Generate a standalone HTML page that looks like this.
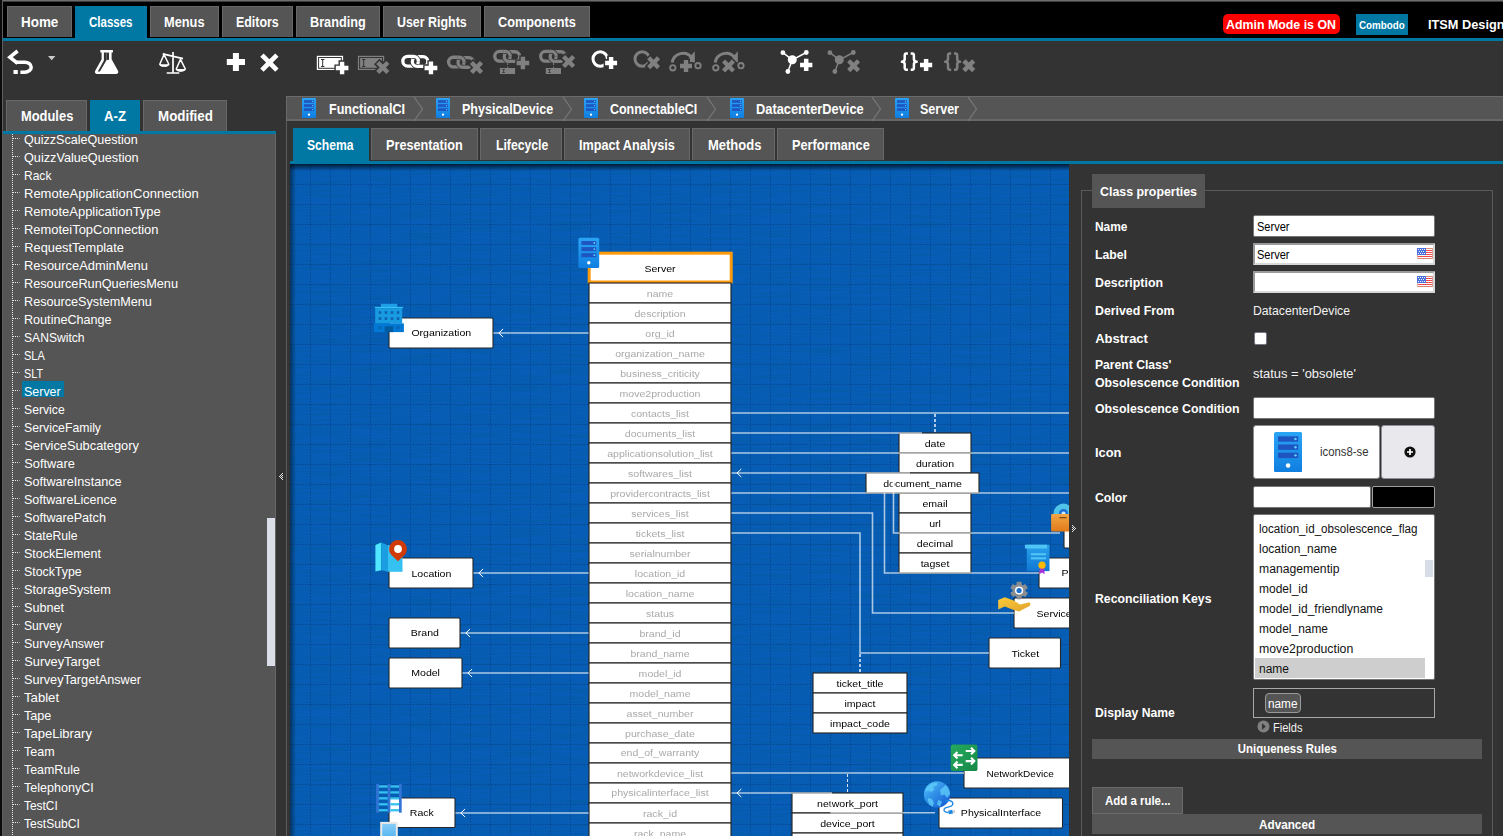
<!DOCTYPE html>
<html><head><meta charset="utf-8"><title>ITSM Designer</title>
<style>
*{box-sizing:border-box;margin:0;padding:0}
html,body{width:1503px;height:836px;overflow:hidden;background:#333;font-family:"Liberation Sans",sans-serif;color:#fff}
.a{position:absolute}
.t{position:absolute;white-space:nowrap;display:block}
svg{position:absolute;overflow:hidden}
svg text{font-family:"Liberation Sans",sans-serif}
</style></head><body>
<div class="a" style="left:0px;top:0px;width:1503px;height:836px;background:#333;"></div>
<div class="a" style="left:3px;top:2px;width:1500px;height:36px;background:#000;"></div>
<div class="a" style="left:0px;top:0px;width:1503px;height:1px;background:#6e6e6e;"></div>
<div class="a" style="left:0px;top:1px;width:1503px;height:1px;background:#3c3c3c;"></div>
<div class="a" style="left:0px;top:0px;width:2px;height:836px;background:#0c0c0c;"></div>
<div class="a" style="left:2px;top:0px;width:1px;height:836px;background:#5e5e5e;"></div>
<div class="a" style="left:3px;top:37.7px;width:1500px;height:3.3px;background:#0078a3;"></div>
<div class="a" style="left:7px;top:6px;width:65px;height:31px;background:#555;border:1px solid #686868;border-bottom:0;"></div>
<span class="t" style="left:21.00px;top:13.20px;font-size:14px;line-height:18px;font-weight:700;color:#fff;transform:scaleX(0.9587);transform-origin:0 50%;">Home</span>
<div class="a" style="left:75px;top:6px;width:72px;height:32px;background:#0078a3;border:1px solid #0078a3;"></div>
<span class="t" style="left:89.20px;top:13.20px;font-size:14px;line-height:18px;font-weight:700;color:#fff;transform:scaleX(0.8217);transform-origin:0 50%;">Classes</span>
<div class="a" style="left:150px;top:6px;width:69px;height:31px;background:#555;border:1px solid #686868;border-bottom:0;"></div>
<span class="t" style="left:164.10px;top:13.20px;font-size:14px;line-height:18px;font-weight:700;color:#fff;transform:scaleX(0.9133);transform-origin:0 50%;">Menus</span>
<div class="a" style="left:222px;top:6px;width:71px;height:31px;background:#555;border:1px solid #686868;border-bottom:0;"></div>
<span class="t" style="left:236.10px;top:13.20px;font-size:14px;line-height:18px;font-weight:700;color:#fff;transform:scaleX(0.8853);transform-origin:0 50%;">Editors</span>
<div class="a" style="left:296px;top:6px;width:84px;height:31px;background:#555;border:1px solid #686868;border-bottom:0;"></div>
<span class="t" style="left:310.20px;top:13.20px;font-size:14px;line-height:18px;font-weight:700;color:#fff;transform:scaleX(0.9064);transform-origin:0 50%;">Branding</span>
<div class="a" style="left:383px;top:6px;width:98px;height:31px;background:#555;border:1px solid #686868;border-bottom:0;"></div>
<span class="t" style="left:397.30px;top:13.20px;font-size:14px;line-height:18px;font-weight:700;color:#fff;transform:scaleX(0.8870);transform-origin:0 50%;">User Rights</span>
<div class="a" style="left:484px;top:6px;width:106px;height:31px;background:#555;border:1px solid #686868;border-bottom:0;"></div>
<span class="t" style="left:498.30px;top:13.20px;font-size:14px;line-height:18px;font-weight:700;color:#fff;transform:scaleX(0.9093);transform-origin:0 50%;">Components</span>
<div class="a" style="left:1223px;top:14px;width:117px;height:20px;background:#f00;border-radius:5px;"></div>
<span class="t" style="left:1226.40px;top:16.00px;font-size:13px;line-height:17px;font-weight:700;color:#fff;transform:scaleX(0.9519);transform-origin:0 50%;">Admin Mode is ON</span>
<div class="a" style="left:1356px;top:14px;width:52px;height:21px;background:#0078a3;"></div>
<span class="t" style="left:1359.30px;top:17.80px;font-size:11px;line-height:15px;font-weight:700;color:#fff;transform:scaleX(0.8904);transform-origin:0 50%;">Combodo</span>
<span class="t" style="left:1428.00px;top:16.10px;font-size:13px;line-height:17px;font-weight:700;color:#fff;transform:scaleX(0.9812);transform-origin:0 50%;">ITSM Designer</span>
<svg class="a" style="left:0;top:41px" width="1503" height="50" viewBox="0 41 1503 50"><path fill="none" stroke="#fff" stroke-width="3.5" d="M15 62.2H24.8a6.400 5 0 0 1 0 10H20.4"/><path fill="none" stroke="#fff" stroke-width="3.6" stroke-linejoin="miter" d="M17.6 51L9.9 57.2L17.6 63.400"/><rect x="13.5" y="70" width="4.300" height="4" fill="#fff"/><path fill="#ccc" d="M48 56h7.4l-3.7 4.3z"/><path fill="#fff" d="M100.3 50h12.6v2.6h-1.3v6.6l6.4 11.6c.9 1.7-.2 3.2-2 3.2H97.2c-1.800 0-2.9-1.500-2-3.200l6.400-11.600v-6.600h-1.300z"/><path fill="#333" d="M103.900 52.600h2.7v7.300l-6.700 11.700h-2.100l6.100-11.100z"/><path fill="#333" d="M106.6 59.9h2.400v-7.300h-2.400z"/><g fill="none" stroke="#fff" stroke-width="1.7"><path d="M173 52v20.500M162.700 53.800L183 58.600M166.700 73h12.600" /><path d="M164 54.500l-4.200 9.700a4.600 2.400 0 0 0 9 0z M180.500 59.300l-4.200 9.700a4.600 2.400 0 0 0 9 0z" stroke-width="1.5"/></g><path fill="#fff" d="M159.500 64.200h9.300a4.700 2.800 0 0 1-9.300 0zM176 69h9.300a4.700 2.800 0 0 1-9.300 0z"/><path fill="#fff" d="M232.9 52.9h6v6.1h6.1v6h-6.1v6.1h-6v-6.1h-6.1v-6h6.1z"/><g transform="rotate(45 269.4 62.6)"><path fill="#fff" d="M267.05 52.0095h4.7v8.2405h8.2405v4.7h-8.2405v8.2405h-4.7v-8.2405h-8.2405v-4.7h8.2405z"/></g><rect x="316.800" y="55.800" width="26.300" height="14.200" fill="#fff"/><rect x="318.600" y="57.500" width="22.700" height="10.800" fill="none" stroke="#333" stroke-width="1"/><path stroke="#333" stroke-width="1" fill="none" d="M321 59.500h3.400M321 66.500h3.400M322.700 59.500v7"/><path fill="#333" d="M338.5 60.3h7.2v4.1h4.1v7.2h-4.1v4.1h-7.2v-4.1h-4.1v-7.2h4.1z"/><path fill="#fff" d="M339.9 61.7h4.4v4.1h4.1v4.4h-4.1v4.1h-4.4v-4.1h-4.1v-4.4h4.1z"/><rect x="357.900" y="55.800" width="26.300" height="14.200" fill="#808080"/><rect x="359.600" y="57.500" width="22.900" height="10.800" fill="none" stroke="#333" stroke-width="1"/><path stroke="#333" stroke-width="1" fill="none" d="M362 59.500h3.400M362 66.500h3.400M363.700 59.500v7"/><g transform="rotate(45 382.8 67.5)"><path fill="#333" d="M378.9 58.945h7.8v4.655h4.655v7.8h-4.655v4.655h-7.8v-4.655h-4.655v-7.8h4.655z"/></g><g transform="rotate(45 382.8 67.5)"><path fill="#808080" d="M380.6 60.42h4.4v4.88h4.88v4.4h-4.88v4.88h-4.4v-4.88h-4.88v-4.4h4.88z"/></g><defs><clipPath id="ca1"><rect x="409.7" y="61.35" width="9" height="13.3"/></clipPath><clipPath id="cb1"><rect x="412" y="52.7" width="9" height="8.65"/></clipPath></defs><g fill="none"><rect x="402.85" y="56.35" width="15.5" height="9.7" rx="4.85" stroke="#fff" stroke-width="3.3"/><rect x="412.35" y="56.65" width="15.5" height="9.7" rx="4.85" stroke="#333" stroke-width="4.8" clip-path="url(#ca1)"/><rect x="412.35" y="56.65" width="15.5" height="9.7" rx="4.85" stroke="#fff" stroke-width="3.3"/><rect x="402.85" y="56.35" width="15.5" height="9.7" rx="4.85" stroke="#333" stroke-width="4.8" clip-path="url(#cb1)"/><rect x="402.85" y="56.35" width="15.5" height="9.7" rx="4.85" stroke="#fff" stroke-width="3.3" clip-path="url(#cb1)"/></g><path fill="#333" d="M427.35 60.25h7.2v4.1h4.1v7.2h-4.1v4.1h-7.2v-4.1h-4.1v-7.2h4.1z"/><path fill="#fff" d="M428.75 61.55h4.4v4.2h4.2v4.4h-4.2v4.2h-4.4v-4.2h-4.2v-4.4h4.2z"/><defs><clipPath id="ca2"><rect x="455.4" y="62.25" width="9" height="13.3"/></clipPath><clipPath id="cb2"><rect x="457.7" y="53.6" width="9" height="8.65"/></clipPath></defs><g fill="none"><rect x="448.55" y="57.25" width="15.5" height="9.7" rx="4.85" stroke="#808080" stroke-width="3.3"/><rect x="458.05" y="57.55" width="15.5" height="9.7" rx="4.85" stroke="#333" stroke-width="4.8" clip-path="url(#ca2)"/><rect x="458.05" y="57.55" width="15.5" height="9.7" rx="4.85" stroke="#808080" stroke-width="3.3"/><rect x="448.55" y="57.25" width="15.5" height="9.7" rx="4.85" stroke="#333" stroke-width="4.8" clip-path="url(#cb2)"/><rect x="448.55" y="57.25" width="15.5" height="9.7" rx="4.85" stroke="#808080" stroke-width="3.3" clip-path="url(#cb2)"/></g><g transform="rotate(45 476.5 67.5)"><path fill="#333" d="M472.6 58.945h7.8v4.655h4.655v7.8h-4.655v4.655h-7.8v-4.655h-4.655v-7.8h4.655z"/></g><g transform="rotate(45 476.5 67.5)"><path fill="#808080" d="M474.3 60.42h4.4v4.88h4.88v4.4h-4.88v4.88h-4.4v-4.88h-4.88v-4.4h4.88z"/></g><defs><clipPath id="ca3"><rect x="501.6" y="56.45" width="9" height="13.3"/></clipPath><clipPath id="cb3"><rect x="503.9" y="47.8" width="9" height="8.65"/></clipPath></defs><g fill="none"><rect x="494.75" y="51.45" width="15.5" height="9.7" rx="4.85" stroke="#808080" stroke-width="3.3"/><rect x="504.25" y="51.75" width="15.5" height="9.7" rx="4.85" stroke="#333" stroke-width="4.8" clip-path="url(#ca3)"/><rect x="504.25" y="51.75" width="15.5" height="9.7" rx="4.85" stroke="#808080" stroke-width="3.3"/><rect x="494.75" y="51.45" width="15.5" height="9.7" rx="4.85" stroke="#333" stroke-width="4.8" clip-path="url(#cb3)"/><rect x="494.75" y="51.45" width="15.5" height="9.7" rx="4.85" stroke="#808080" stroke-width="3.3" clip-path="url(#cb3)"/></g><path fill="#333" d="M519.3 55.3h7.2v4.1h4.1v7.2h-4.1v4.1h-7.2v-4.1h-4.1v-7.2h4.1z"/><path fill="#808080" d="M520.7 56.7h4.4v4.1h4.1v4.4h-4.1v4.1h-4.4v-4.1h-4.1v-4.4h4.1z"/><rect x="499.900" y="68" width="15.200" height="6" fill="#808080"/><path stroke="#808080" stroke-width="1" stroke-dasharray="2 1.5" d="M507.700 63v5"/><path stroke="#333" stroke-width=".8" fill="none" d="M502.300 69.500h2.600M502.300 72.500h2.600M503.600 69.500v3"/><defs><clipPath id="ca4"><rect x="547.5" y="56.45" width="9" height="13.3"/></clipPath><clipPath id="cb4"><rect x="549.8" y="47.8" width="9" height="8.65"/></clipPath></defs><g fill="none"><rect x="540.65" y="51.45" width="15.5" height="9.7" rx="4.85" stroke="#808080" stroke-width="3.3"/><rect x="550.15" y="51.75" width="15.5" height="9.7" rx="4.85" stroke="#333" stroke-width="4.8" clip-path="url(#ca4)"/><rect x="550.15" y="51.75" width="15.5" height="9.7" rx="4.85" stroke="#808080" stroke-width="3.3"/><rect x="540.65" y="51.45" width="15.5" height="9.7" rx="4.85" stroke="#333" stroke-width="4.8" clip-path="url(#cb4)"/><rect x="540.65" y="51.45" width="15.5" height="9.7" rx="4.85" stroke="#808080" stroke-width="3.3" clip-path="url(#cb4)"/></g><g transform="rotate(45 568.6 61.5)"><path fill="#333" d="M564.7 52.945h7.8v4.655h4.655v7.8h-4.655v4.655h-7.8v-4.655h-4.655v-7.8h4.655z"/></g><g transform="rotate(45 568.6 61.5)"><path fill="#808080" d="M566.4 54.42h4.4v4.88h4.88v4.4h-4.88v4.88h-4.4v-4.88h-4.88v-4.4h4.88z"/></g><rect x="545.800" y="68" width="15.200" height="6" fill="#808080"/><path stroke="#808080" stroke-width="1" stroke-dasharray="2 1.5" d="M553.600 63v5"/><path stroke="#333" stroke-width=".8" fill="none" d="M548.200 69.500h2.600M548.200 72.500h2.600M549.500 69.500v3"/><circle cx="600.200" cy="59" r="7.200" fill="none" stroke="#fff" stroke-width="3"/><path fill="#333" d="M607.1 55.5h8v3.5h3.5v8h-3.5v3.5h-8v-3.5h-3.5v-8h3.5z"/><path fill="#fff" d="M608.9 57h4.4v3.8h3.8v4.4h-3.8v3.8h-4.4v-3.8h-3.8v-4.4h3.8z"/><circle cx="642.200" cy="59" r="7.200" fill="none" stroke="#808080" stroke-width="3"/><g transform="rotate(45 653.6 62.7)"><path fill="#333" d="M649.7 54.145h7.8v4.655h4.655v7.8h-4.655v4.655h-7.8v-4.655h-4.655v-7.8h4.655z"/></g><g transform="rotate(45 653.6 62.7)"><path fill="#808080" d="M651.45 55.738h4.3v4.812h4.812v4.3h-4.812v4.812h-4.3v-4.812h-4.812v-4.3h4.812z"/></g><path fill="none" stroke="#808080" stroke-width="3" d="M672.2 62.500a11 11 0 0 1 19.500-5"/><path fill="#808080" d="M694.8 51.300v11.200h-9.800z"/><circle cx="672.8" cy="67.800" r="2.700" fill="none" stroke="#808080" stroke-width="1.800"/><circle cx="698" cy="65.700" r="2.700" fill="none" stroke="#808080" stroke-width="1.800"/><path fill="#333" d="M682 58.5h8v3.5h3.5v8h-3.5v3.5h-8v-3.5h-3.5v-8h3.5z"/><path fill="#808080" d="M683.8 60h4.4v3.8h3.8v4.4h-3.8v3.8h-4.4v-3.8h-3.8v-4.4h3.8z"/><path fill="none" stroke="#808080" stroke-width="3" d="M715.2 62.500a11 11 0 0 1 19.500-5"/><path fill="#808080" d="M737.8 51.300v11.200h-9.800z"/><circle cx="715.8" cy="67.800" r="2.700" fill="none" stroke="#808080" stroke-width="1.800"/><circle cx="741" cy="65.700" r="2.700" fill="none" stroke="#808080" stroke-width="1.800"/><g transform="rotate(45 728.5 66)"><path fill="#333" d="M724.6 57.445h7.8v4.655h4.655v7.8h-4.655v4.655h-7.8v-4.655h-4.655v-7.8h4.655z"/></g><g transform="rotate(45 728.5 66)"><path fill="#808080" d="M726.35 59.038h4.3v4.812h4.812v4.3h-4.812v4.812h-4.3v-4.812h-4.812v-4.3h4.812z"/></g><g stroke="#fff" stroke-width="1.500" fill="none"><path d="M782.9 52.700L792.3 59.800L806.3 52.500M792.3 59.800L787.9 71.500"/></g><g fill="#fff"><circle cx="782.9" cy="52.700" r="2.400"/><circle cx="806.3" cy="52.500" r="2.400"/><circle cx="792.3" cy="59.800" r="4.500"/><circle cx="787.9" cy="71.500" r="2.400"/></g><path fill="#333" d="M802.2 57.3h8v3.6h3.6v8h-3.6v3.6h-8v-3.6h-3.6v-8h3.6z"/><path fill="#fff" d="M803.95 58.75h4.5v3.9h3.9v4.5h-3.9v3.9h-4.5v-3.9h-3.9v-4.5h3.9z"/><g stroke="#808080" stroke-width="1.500" fill="none"><path d="M829.9 52.700L839.3 59.800L853.3 52.500M839.3 59.800L834.9 71.500"/></g><g fill="#808080"><circle cx="829.9" cy="52.700" r="2.400"/><circle cx="853.3" cy="52.500" r="2.400"/><circle cx="839.3" cy="59.800" r="4.500"/><circle cx="834.9" cy="71.500" r="2.400"/></g><g transform="rotate(45 853.6 65.7)"><path fill="#333" d="M849.7 57.145h7.8v4.655h4.655v7.8h-4.655v4.655h-7.8v-4.655h-4.655v-7.8h4.655z"/></g><g transform="rotate(45 853.6 65.7)"><path fill="#808080" d="M851.45 58.738h4.3v4.812h4.812v4.3h-4.812v4.812h-4.3v-4.812h-4.812v-4.3h4.812z"/></g><path fill="none" stroke="#fff" stroke-width="2.500" stroke-linejoin="round" d="M907.9 53.6H906.3Q904.7 53.6 904.7 55.8V59.1Q904.7 61.7 901.9 61.7Q904.7 61.7 904.7 64.3V67.6Q904.7 69.8 906.3 69.8H907.9M910.7 53.6H912.3Q913.9 53.6 913.9 55.8V59.1Q913.9 61.7 916.7 61.7Q913.9 61.7 913.9 64.3V67.6Q913.9 69.8 912.3 69.8H910.7"/><path fill="#fff" d="M923.85 58.9h4.5v3.85h3.85v4.5h-3.85v3.85h-4.5v-3.85h-3.85v-4.5h3.85z"/><path fill="none" stroke="#808080" stroke-width="2.500" stroke-linejoin="round" d="M951.2 53.6H949.6Q948 53.6 948 55.8V59.1Q948 61.7 945.2 61.7Q948 61.7 948 64.3V67.6Q948 69.8 949.6 69.8H951.2M954 53.6H955.6Q957.2 53.6 957.2 55.8V59.1Q957.2 61.7 960 61.7Q957.2 61.7 957.2 64.3V67.6Q957.2 69.8 955.6 69.8H954"/><g transform="rotate(45 968.8 65.7)"><path fill="#808080" d="M966.5 58.856h4.6v4.544h4.544v4.6h-4.544v4.544h-4.6v-4.544h-4.544v-4.6h4.544z"/></g></svg>
<div class="a" style="left:286px;top:96px;width:1217px;height:25.1px;background:#555;border:1px solid #6a6a6a;border-bottom:2px solid #676767;border-right:0"></div>
<svg class="a" style="left:301.8px;top:98px" width="14" height="20" viewBox="0 0 21 30"><defs><linearGradient id="sgb0" x1="0" y1="0" x2="0" y2="1"><stop offset="0" stop-color="#2aa4f4"/><stop offset="1" stop-color="#0f7ee0"/></linearGradient></defs><rect width="21" height="30" rx="1.500" fill="url(#sgb0)"/><rect x="3" y="3.200" width="15" height="4" fill="#1f55c0"/><rect x="3" y="9.300" width="15" height="4" fill="#1f55c0"/><rect x="3" y="15.400" width="15" height="4" fill="#1f55c0"/><circle cx="16" cy="5.200" r=".9" fill="#5fd2ff"/><circle cx="16" cy="11.300" r=".9" fill="#5fd2ff"/><circle cx="16" cy="17.400" r=".9" fill="#5fd2ff"/><circle cx="10.500" cy="25" r="1.700" fill="#fff"/></svg>
<span class="t" style="left:328.60px;top:100.20px;font-size:14px;line-height:18px;font-weight:700;color:#fff;transform:scaleX(0.8964);transform-origin:0 50%;">FunctionalCI</span>
<svg class="a" style="left:436.4px;top:98px" width="14" height="20" viewBox="0 0 21 30"><defs><linearGradient id="sgb1" x1="0" y1="0" x2="0" y2="1"><stop offset="0" stop-color="#2aa4f4"/><stop offset="1" stop-color="#0f7ee0"/></linearGradient></defs><rect width="21" height="30" rx="1.500" fill="url(#sgb1)"/><rect x="3" y="3.200" width="15" height="4" fill="#1f55c0"/><rect x="3" y="9.300" width="15" height="4" fill="#1f55c0"/><rect x="3" y="15.400" width="15" height="4" fill="#1f55c0"/><circle cx="16" cy="5.200" r=".9" fill="#5fd2ff"/><circle cx="16" cy="11.300" r=".9" fill="#5fd2ff"/><circle cx="16" cy="17.400" r=".9" fill="#5fd2ff"/><circle cx="10.500" cy="25" r="1.700" fill="#fff"/></svg>
<span class="t" style="left:461.80px;top:100.20px;font-size:14px;line-height:18px;font-weight:700;color:#fff;transform:scaleX(0.8944);transform-origin:0 50%;">PhysicalDevice</span>
<svg class="a" style="left:584.1px;top:98px" width="14" height="20" viewBox="0 0 21 30"><defs><linearGradient id="sgb2" x1="0" y1="0" x2="0" y2="1"><stop offset="0" stop-color="#2aa4f4"/><stop offset="1" stop-color="#0f7ee0"/></linearGradient></defs><rect width="21" height="30" rx="1.500" fill="url(#sgb2)"/><rect x="3" y="3.200" width="15" height="4" fill="#1f55c0"/><rect x="3" y="9.300" width="15" height="4" fill="#1f55c0"/><rect x="3" y="15.400" width="15" height="4" fill="#1f55c0"/><circle cx="16" cy="5.200" r=".9" fill="#5fd2ff"/><circle cx="16" cy="11.300" r=".9" fill="#5fd2ff"/><circle cx="16" cy="17.400" r=".9" fill="#5fd2ff"/><circle cx="10.500" cy="25" r="1.700" fill="#fff"/></svg>
<span class="t" style="left:610.40px;top:100.20px;font-size:14px;line-height:18px;font-weight:700;color:#fff;transform:scaleX(0.8907);transform-origin:0 50%;">ConnectableCI</span>
<svg class="a" style="left:730.2px;top:98px" width="14" height="20" viewBox="0 0 21 30"><defs><linearGradient id="sgb3" x1="0" y1="0" x2="0" y2="1"><stop offset="0" stop-color="#2aa4f4"/><stop offset="1" stop-color="#0f7ee0"/></linearGradient></defs><rect width="21" height="30" rx="1.500" fill="url(#sgb3)"/><rect x="3" y="3.200" width="15" height="4" fill="#1f55c0"/><rect x="3" y="9.300" width="15" height="4" fill="#1f55c0"/><rect x="3" y="15.400" width="15" height="4" fill="#1f55c0"/><circle cx="16" cy="5.200" r=".9" fill="#5fd2ff"/><circle cx="16" cy="11.300" r=".9" fill="#5fd2ff"/><circle cx="16" cy="17.400" r=".9" fill="#5fd2ff"/><circle cx="10.500" cy="25" r="1.700" fill="#fff"/></svg>
<span class="t" style="left:755.50px;top:100.20px;font-size:14px;line-height:18px;font-weight:700;color:#fff;transform:scaleX(0.9165);transform-origin:0 50%;">DatacenterDevice</span>
<svg class="a" style="left:895.2px;top:98px" width="14" height="20" viewBox="0 0 21 30"><defs><linearGradient id="sgb4" x1="0" y1="0" x2="0" y2="1"><stop offset="0" stop-color="#2aa4f4"/><stop offset="1" stop-color="#0f7ee0"/></linearGradient></defs><rect width="21" height="30" rx="1.500" fill="url(#sgb4)"/><rect x="3" y="3.200" width="15" height="4" fill="#1f55c0"/><rect x="3" y="9.300" width="15" height="4" fill="#1f55c0"/><rect x="3" y="15.400" width="15" height="4" fill="#1f55c0"/><circle cx="16" cy="5.200" r=".9" fill="#5fd2ff"/><circle cx="16" cy="11.300" r=".9" fill="#5fd2ff"/><circle cx="16" cy="17.400" r=".9" fill="#5fd2ff"/><circle cx="10.500" cy="25" r="1.700" fill="#fff"/></svg>
<span class="t" style="left:920.00px;top:100.20px;font-size:14px;line-height:18px;font-weight:700;color:#fff;transform:scaleX(0.8946);transform-origin:0 50%;">Server</span>
<svg class="a" style="left:286px;top:97px" width="700" height="24" viewBox="286 97 700 24"><g fill="none" stroke="#787878" stroke-width="1.200"><path d="M414 97l8.500 12l-8.500 12"/><path d="M563 97l8.500 12l-8.500 12"/><path d="M707 97l8.500 12l-8.500 12"/><path d="M872 97l8.500 12l-8.500 12"/><path d="M968 97l8.500 12l-8.500 12"/></g></svg>
<div class="a" style="left:286px;top:121px;width:1px;height:715px;background:#5c5c5c;"></div>
<div class="a" style="left:293px;top:128px;width:76px;height:33.5px;background:#0078a3;border:1px solid #0078a3;"></div>
<span class="t" style="left:306.90px;top:136.30px;font-size:14px;line-height:18px;font-weight:700;color:#fff;transform:scaleX(0.8659);transform-origin:0 50%;">Schema</span>
<div class="a" style="left:371px;top:128px;width:107px;height:32px;background:#555;border:1px solid #686868;border-bottom:0;"></div>
<span class="t" style="left:386.40px;top:136.30px;font-size:14px;line-height:18px;font-weight:700;color:#fff;transform:scaleX(0.9055);transform-origin:0 50%;">Presentation</span>
<div class="a" style="left:480px;top:128px;width:82px;height:32px;background:#555;border:1px solid #686868;border-bottom:0;"></div>
<span class="t" style="left:495.50px;top:136.30px;font-size:14px;line-height:18px;font-weight:700;color:#fff;transform:scaleX(0.8726);transform-origin:0 50%;">Lifecycle</span>
<div class="a" style="left:564px;top:128px;width:126.3px;height:32px;background:#555;border:1px solid #686868;border-bottom:0;"></div>
<span class="t" style="left:579.30px;top:136.30px;font-size:14px;line-height:18px;font-weight:700;color:#fff;transform:scaleX(0.9033);transform-origin:0 50%;">Impact Analysis</span>
<div class="a" style="left:692px;top:128px;width:83.4px;height:32px;background:#555;border:1px solid #686868;border-bottom:0;"></div>
<span class="t" style="left:707.60px;top:136.30px;font-size:14px;line-height:18px;font-weight:700;color:#fff;transform:scaleX(0.9277);transform-origin:0 50%;">Methods</span>
<div class="a" style="left:777px;top:128px;width:107px;height:32px;background:#555;border:1px solid #686868;border-bottom:0;"></div>
<span class="t" style="left:792.20px;top:136.30px;font-size:14px;line-height:18px;font-weight:700;color:#fff;transform:scaleX(0.9078);transform-origin:0 50%;">Performance</span>
<div class="a" style="left:290px;top:160.7px;width:1213px;height:3.4px;background:#0078a3;"></div>
<div class="a" style="left:6px;top:100px;width:81px;height:31px;background:#555;border:1px solid #686868;border-bottom:0;"></div>
<span class="t" style="left:20.60px;top:107.30px;font-size:14px;line-height:18px;font-weight:700;color:#fff;transform:scaleX(0.9211);transform-origin:0 50%;">Modules</span>
<div class="a" style="left:90px;top:100px;width:50px;height:31.5px;background:#0078a3;border:1px solid #0078a3;"></div>
<span class="t" style="left:104.20px;top:107.30px;font-size:14px;line-height:18px;font-weight:700;color:#fff;transform:scaleX(0.9431);transform-origin:0 50%;">A-Z</span>
<div class="a" style="left:143px;top:100px;width:84px;height:31px;background:#555;border:1px solid #686868;border-bottom:0;"></div>
<span class="t" style="left:157.70px;top:107.30px;font-size:14px;line-height:18px;font-weight:700;color:#fff;transform:scaleX(0.9540);transform-origin:0 50%;">Modified</span>
<div class="a" style="left:3px;top:131px;width:273px;height:3px;background:#0078a3;"></div>
<div class="a" style="left:3px;top:134px;width:273px;height:702px;background:#555;border-right:1px solid #666"></div>
<svg class="a" style="left:3px;top:134px" width="30" height="702" viewBox="3 134 30 702"><g stroke="#e8e8e8" stroke-width="1" stroke-dasharray="1 1" fill="none"><path d="M12.5 134V836"/><path d="M13 138.5H19.500"/><path d="M13 156.5H19.500"/><path d="M13 174.5H19.500"/><path d="M13 192.5H19.500"/><path d="M13 210.5H19.500"/><path d="M13 228.5H19.500"/><path d="M13 246.5H19.500"/><path d="M13 264.5H19.500"/><path d="M13 282.5H19.500"/><path d="M13 300.5H19.500"/><path d="M13 318.5H19.500"/><path d="M13 336.5H19.500"/><path d="M13 354.5H19.500"/><path d="M13 372.5H19.500"/><path d="M13 390.5H19.500"/><path d="M13 408.5H19.500"/><path d="M13 426.5H19.500"/><path d="M13 444.5H19.500"/><path d="M13 462.5H19.500"/><path d="M13 480.5H19.500"/><path d="M13 498.5H19.500"/><path d="M13 516.5H19.500"/><path d="M13 534.5H19.500"/><path d="M13 552.5H19.500"/><path d="M13 570.5H19.500"/><path d="M13 588.5H19.500"/><path d="M13 606.5H19.500"/><path d="M13 624.5H19.500"/><path d="M13 642.5H19.500"/><path d="M13 660.5H19.500"/><path d="M13 678.5H19.500"/><path d="M13 696.5H19.500"/><path d="M13 714.5H19.500"/><path d="M13 732.5H19.500"/><path d="M13 750.5H19.500"/><path d="M13 768.5H19.500"/><path d="M13 786.5H19.500"/><path d="M13 804.5H19.500"/><path d="M13 822.5H19.500"/></g></svg>
<div class="a" style="left:22px;top:381px;width:42px;height:16px;background:#0078a3;"></div>
<span class="t" style="left:24.30px;top:131.80px;font-size:12.8px;line-height:16.8px;font-weight:400;color:#fff;transform:scaleX(0.9806);transform-origin:0 50%;">QuizzScaleQuestion</span>
<span class="t" style="left:24.30px;top:149.80px;font-size:12.8px;line-height:16.8px;font-weight:400;color:#fff;transform:scaleX(0.9903);transform-origin:0 50%;">QuizzValueQuestion</span>
<span class="t" style="left:24.30px;top:167.80px;font-size:12.8px;line-height:16.8px;font-weight:400;color:#fff;transform:scaleX(0.9398);transform-origin:0 50%;">Rack</span>
<span class="t" style="left:24.30px;top:185.80px;font-size:12.8px;line-height:16.8px;font-weight:400;color:#fff;transform:scaleX(1.0154);transform-origin:0 50%;">RemoteApplicationConnection</span>
<span class="t" style="left:24.30px;top:203.80px;font-size:12.8px;line-height:16.8px;font-weight:400;color:#fff;transform:scaleX(1.0114);transform-origin:0 50%;">RemoteApplicationType</span>
<span class="t" style="left:24.30px;top:221.80px;font-size:12.8px;line-height:16.8px;font-weight:400;color:#fff;transform:scaleX(1.0110);transform-origin:0 50%;">RemoteiTopConnection</span>
<span class="t" style="left:24.30px;top:239.80px;font-size:12.8px;line-height:16.8px;font-weight:400;color:#fff;">RequestTemplate</span>
<span class="t" style="left:24.30px;top:257.80px;font-size:12.8px;line-height:16.8px;font-weight:400;color:#fff;transform:scaleX(1.0068);transform-origin:0 50%;">ResourceAdminMenu</span>
<span class="t" style="left:24.30px;top:275.80px;font-size:12.8px;line-height:16.8px;font-weight:400;color:#fff;transform:scaleX(0.9931);transform-origin:0 50%;">ResourceRunQueriesMenu</span>
<span class="t" style="left:24.30px;top:293.80px;font-size:12.8px;line-height:16.8px;font-weight:400;color:#fff;transform:scaleX(0.9880);transform-origin:0 50%;">ResourceSystemMenu</span>
<span class="t" style="left:24.30px;top:311.80px;font-size:12.8px;line-height:16.8px;font-weight:400;color:#fff;transform:scaleX(0.9850);transform-origin:0 50%;">RoutineChange</span>
<span class="t" style="left:24.30px;top:329.80px;font-size:12.8px;line-height:16.8px;font-weight:400;color:#fff;transform:scaleX(0.9466);transform-origin:0 50%;">SANSwitch</span>
<span class="t" style="left:24.30px;top:347.80px;font-size:12.8px;line-height:16.8px;font-weight:400;color:#fff;transform:scaleX(0.8594);transform-origin:0 50%;">SLA</span>
<span class="t" style="left:24.30px;top:365.80px;font-size:12.8px;line-height:16.8px;font-weight:400;color:#fff;transform:scaleX(0.8433);transform-origin:0 50%;">SLT</span>
<span class="t" style="left:24.30px;top:383.80px;font-size:12.8px;line-height:16.8px;font-weight:400;color:#fff;transform:scaleX(0.9734);transform-origin:0 50%;">Server</span>
<span class="t" style="left:24.30px;top:401.80px;font-size:12.8px;line-height:16.8px;font-weight:400;color:#fff;transform:scaleX(0.9538);transform-origin:0 50%;">Service</span>
<span class="t" style="left:24.30px;top:419.80px;font-size:12.8px;line-height:16.8px;font-weight:400;color:#fff;transform:scaleX(0.9582);transform-origin:0 50%;">ServiceFamily</span>
<span class="t" style="left:24.30px;top:437.80px;font-size:12.8px;line-height:16.8px;font-weight:400;color:#fff;">ServiceSubcategory</span>
<span class="t" style="left:24.30px;top:455.80px;font-size:12.8px;line-height:16.8px;font-weight:400;color:#fff;">Software</span>
<span class="t" style="left:24.30px;top:473.80px;font-size:12.8px;line-height:16.8px;font-weight:400;color:#fff;transform:scaleX(0.9869);transform-origin:0 50%;">SoftwareInstance</span>
<span class="t" style="left:24.30px;top:491.80px;font-size:12.8px;line-height:16.8px;font-weight:400;color:#fff;transform:scaleX(0.9798);transform-origin:0 50%;">SoftwareLicence</span>
<span class="t" style="left:24.30px;top:509.80px;font-size:12.8px;line-height:16.8px;font-weight:400;color:#fff;transform:scaleX(0.9840);transform-origin:0 50%;">SoftwarePatch</span>
<span class="t" style="left:24.30px;top:527.80px;font-size:12.8px;line-height:16.8px;font-weight:400;color:#fff;transform:scaleX(0.9519);transform-origin:0 50%;">StateRule</span>
<span class="t" style="left:24.30px;top:545.80px;font-size:12.8px;line-height:16.8px;font-weight:400;color:#fff;transform:scaleX(0.9740);transform-origin:0 50%;">StockElement</span>
<span class="t" style="left:24.30px;top:563.80px;font-size:12.8px;line-height:16.8px;font-weight:400;color:#fff;transform:scaleX(0.9640);transform-origin:0 50%;">StockType</span>
<span class="t" style="left:24.30px;top:581.80px;font-size:12.8px;line-height:16.8px;font-weight:400;color:#fff;transform:scaleX(0.9920);transform-origin:0 50%;">StorageSystem</span>
<span class="t" style="left:24.30px;top:599.80px;font-size:12.8px;line-height:16.8px;font-weight:400;color:#fff;transform:scaleX(0.9861);transform-origin:0 50%;">Subnet</span>
<span class="t" style="left:24.30px;top:617.80px;font-size:12.8px;line-height:16.8px;font-weight:400;color:#fff;transform:scaleX(0.9491);transform-origin:0 50%;">Survey</span>
<span class="t" style="left:24.30px;top:635.80px;font-size:12.8px;line-height:16.8px;font-weight:400;color:#fff;transform:scaleX(0.9709);transform-origin:0 50%;">SurveyAnswer</span>
<span class="t" style="left:24.30px;top:653.80px;font-size:12.8px;line-height:16.8px;font-weight:400;color:#fff;">SurveyTarget</span>
<span class="t" style="left:24.30px;top:671.80px;font-size:12.8px;line-height:16.8px;font-weight:400;color:#fff;transform:scaleX(0.9909);transform-origin:0 50%;">SurveyTargetAnswer</span>
<span class="t" style="left:24.30px;top:689.80px;font-size:12.8px;line-height:16.8px;font-weight:400;color:#fff;transform:scaleX(1.0276);transform-origin:0 50%;">Tablet</span>
<span class="t" style="left:24.30px;top:707.80px;font-size:12.8px;line-height:16.8px;font-weight:400;color:#fff;transform:scaleX(0.9874);transform-origin:0 50%;">Tape</span>
<span class="t" style="left:24.30px;top:725.80px;font-size:12.8px;line-height:16.8px;font-weight:400;color:#fff;transform:scaleX(1.0153);transform-origin:0 50%;">TapeLibrary</span>
<span class="t" style="left:24.30px;top:743.80px;font-size:12.8px;line-height:16.8px;font-weight:400;color:#fff;transform:scaleX(0.9777);transform-origin:0 50%;">Team</span>
<span class="t" style="left:24.30px;top:761.80px;font-size:12.8px;line-height:16.8px;font-weight:400;color:#fff;transform:scaleX(0.9683);transform-origin:0 50%;">TeamRule</span>
<span class="t" style="left:24.30px;top:779.80px;font-size:12.8px;line-height:16.8px;font-weight:400;color:#fff;transform:scaleX(0.9797);transform-origin:0 50%;">TelephonyCI</span>
<span class="t" style="left:24.30px;top:797.80px;font-size:12.8px;line-height:16.8px;font-weight:400;color:#fff;transform:scaleX(0.9289);transform-origin:0 50%;">TestCI</span>
<span class="t" style="left:24.30px;top:815.80px;font-size:12.8px;line-height:16.8px;font-weight:400;color:#fff;transform:scaleX(0.9450);transform-origin:0 50%;">TestSubCI</span>
<div class="a" style="left:267px;top:518px;width:8px;height:148px;background:#d9dee7;"></div>
<svg class="a" style="left:279px;top:473px" width="4" height="7" viewBox="0 0 4 7" shape-rendering="crispEdges"><g fill="#e2e2e2"><rect x="0" y="3" width="1" height="1"/><rect x="1" y="2" width="1" height="1"/><rect x="1" y="4" width="1" height="1"/><rect x="2" y="1" width="1" height="1"/><rect x="2" y="3" width="1" height="1"/><rect x="2" y="5" width="1" height="1"/><rect x="3" y="0" width="1" height="1"/><rect x="3" y="2" width="1" height="1"/><rect x="3" y="4" width="1" height="1"/><rect x="3" y="6" width="1" height="1"/></g></svg>
<svg class="a" style="will-change:transform;left:290px;top:164px" width="779" height="672" viewBox="290 164 779 672"><defs><linearGradient id="shT" x1="0" y1="0" x2="0" y2="1"><stop offset="0" stop-color="#000" stop-opacity=".7"/><stop offset="1" stop-color="#000" stop-opacity="0"/></linearGradient><linearGradient id="shL" x1="0" y1="0" x2="1" y2="0"><stop offset="0" stop-color="#000" stop-opacity=".45"/><stop offset="1" stop-color="#000" stop-opacity="0"/></linearGradient><linearGradient id="shR" x1="1" y1="0" x2="0" y2="0"><stop offset="0" stop-color="#000" stop-opacity=".45"/><stop offset="1" stop-color="#000" stop-opacity="0"/></linearGradient><linearGradient id="gsrv" x1="0" y1="0" x2="0" y2="1"><stop offset="0" stop-color="#2aa4f4"/><stop offset="1" stop-color="#0f7ee0"/></linearGradient><linearGradient id="ggrn" x1="0" y1="0" x2="1" y2="1"><stop offset="0" stop-color="#25ab5e"/><stop offset="1" stop-color="#178847"/></linearGradient><linearGradient id="gglb" x1="0" y1="0" x2="1" y2="1"><stop offset="0" stop-color="#4fc0fb"/><stop offset="1" stop-color="#0f55d0"/></linearGradient><linearGradient id="gora" x1="0" y1="0" x2="0" y2="1"><stop offset="0" stop-color="#f2a544"/><stop offset="1" stop-color="#e07a1a"/></linearGradient><linearGradient id="gcer" x1="0" y1="0" x2="0" y2="1"><stop offset="0" stop-color="#2aa2ec"/><stop offset="1" stop-color="#1177d3"/></linearGradient><linearGradient id="ghnd" x1="0" y1="0" x2="1" y2="1"><stop offset="0" stop-color="#fbcb3a"/><stop offset="1" stop-color="#e0a22c"/></linearGradient><linearGradient id="genc" x1="0" y1="0" x2="0" y2="1"><stop offset="0" stop-color="#86cdf8"/><stop offset="1" stop-color="#42a9ee"/></linearGradient><filter id="tx" x="0" y="0" width="100%" height="100%"><feTurbulence type="fractalNoise" baseFrequency="0.02 0.7" numOctaves="2" seed="4"/><feColorMatrix type="matrix" values="0 0 0 0 0  0 0 0 0 0.1  0 0 0 0 0.25  0 0 0 0.7 -0.25"/></filter></defs><rect x="290" y="164" width="779" height="672" fill="#075db7"/><rect x="290" y="164" width="779" height="672" filter="url(#tx)"/><g stroke="#073f86" stroke-width="1" stroke-dasharray="1.800 1.200" fill="none" opacity=".6"><path d="M310.5 164V836"/><path d="M330.5 164V836"/><path d="M350.5 164V836"/><path d="M370.5 164V836"/><path d="M390.5 164V836"/><path d="M410.5 164V836"/><path d="M430.5 164V836"/><path d="M450.5 164V836"/><path d="M470.5 164V836"/><path d="M490.5 164V836"/><path d="M510.5 164V836"/><path d="M530.5 164V836"/><path d="M550.5 164V836"/><path d="M570.5 164V836"/><path d="M590.5 164V836"/><path d="M610.5 164V836"/><path d="M630.5 164V836"/><path d="M650.5 164V836"/><path d="M670.5 164V836"/><path d="M690.5 164V836"/><path d="M710.5 164V836"/><path d="M730.5 164V836"/><path d="M750.5 164V836"/><path d="M770.5 164V836"/><path d="M790.5 164V836"/><path d="M810.5 164V836"/><path d="M830.5 164V836"/><path d="M850.5 164V836"/><path d="M870.5 164V836"/><path d="M890.5 164V836"/><path d="M910.5 164V836"/><path d="M930.5 164V836"/><path d="M950.5 164V836"/><path d="M970.5 164V836"/><path d="M990.5 164V836"/><path d="M1010.5 164V836"/><path d="M1030.5 164V836"/><path d="M1050.5 164V836"/><path d="M290 184.5H1069"/><path d="M290 204.5H1069"/><path d="M290 224.5H1069"/><path d="M290 244.5H1069"/><path d="M290 264.5H1069"/><path d="M290 284.5H1069"/><path d="M290 304.5H1069"/><path d="M290 324.5H1069"/><path d="M290 344.5H1069"/><path d="M290 364.5H1069"/><path d="M290 384.5H1069"/><path d="M290 404.5H1069"/><path d="M290 424.5H1069"/><path d="M290 444.5H1069"/><path d="M290 464.5H1069"/><path d="M290 484.5H1069"/><path d="M290 504.5H1069"/><path d="M290 524.5H1069"/><path d="M290 544.5H1069"/><path d="M290 564.5H1069"/><path d="M290 584.5H1069"/><path d="M290 604.5H1069"/><path d="M290 624.5H1069"/><path d="M290 644.5H1069"/><path d="M290 664.5H1069"/><path d="M290 684.5H1069"/><path d="M290 704.5H1069"/><path d="M290 724.5H1069"/><path d="M290 744.5H1069"/><path d="M290 764.5H1069"/><path d="M290 784.5H1069"/><path d="M290 804.5H1069"/><path d="M290 824.5H1069"/></g><rect x="290" y="164" width="779" height="7" fill="url(#shT)"/><rect x="290" y="164" width="6" height="672" fill="url(#shL)"/><rect x="389" y="318" width="104" height="30" rx="1" fill="#fff" stroke="#262626" stroke-width="1.100"/><text transform="translate(441.3 335.6) scale(1.1 1)" font-size="9.6" fill="#000" text-anchor="middle">Organization</text><rect x="389" y="558" width="84" height="30" rx="1" fill="#fff" stroke="#262626" stroke-width="1.100"/><text transform="translate(431.4 576.8) scale(1.1 1)" font-size="9.6" fill="#000" text-anchor="middle">Location</text><rect x="389" y="618" width="71" height="30" rx="1" fill="#fff" stroke="#262626" stroke-width="1.100"/><text transform="translate(424.9 636.3) scale(1.1 1)" font-size="9.6" fill="#000" text-anchor="middle">Brand</text><rect x="389" y="658" width="73" height="30" rx="1" fill="#fff" stroke="#262626" stroke-width="1.100"/><text transform="translate(425.6 676.3) scale(1.1 1)" font-size="9.6" fill="#000" text-anchor="middle">Model</text><rect x="389" y="798" width="66" height="29.5" rx="1" fill="#fff" stroke="#262626" stroke-width="1.100"/><text transform="translate(421.8 816.3) scale(1.1 1)" font-size="9.6" fill="#000" text-anchor="middle">Rack</text><rect x="589.200" y="253.200" width="142" height="28.800" fill="#fff" stroke="#ff9a0a" stroke-width="3"/><text transform="translate(660 271.8) scale(1.1 1)" font-size="9.6" fill="#000" text-anchor="middle">Server</text><rect x="589" y="283" width="142" height="20" fill="#fff" stroke="#262626" stroke-width="1.150"/><text transform="translate(660 296.65) scale(1.1 1)" font-size="9.6" fill="#a9a9a9" text-anchor="middle">name</text><rect x="589" y="303" width="142" height="20" fill="#fff" stroke="#262626" stroke-width="1.150"/><text transform="translate(660 316.65) scale(1.1 1)" font-size="9.6" fill="#a9a9a9" text-anchor="middle">description</text><rect x="589" y="323" width="142" height="20" fill="#fff" stroke="#262626" stroke-width="1.150"/><text transform="translate(660 336.65) scale(1.1 1)" font-size="9.6" fill="#a9a9a9" text-anchor="middle">org_id</text><rect x="589" y="343" width="142" height="20" fill="#fff" stroke="#262626" stroke-width="1.150"/><text transform="translate(660 356.65) scale(1.1 1)" font-size="9.6" fill="#a9a9a9" text-anchor="middle">organization_name</text><rect x="589" y="363" width="142" height="20" fill="#fff" stroke="#262626" stroke-width="1.150"/><text transform="translate(660 376.65) scale(1.1 1)" font-size="9.6" fill="#a9a9a9" text-anchor="middle">business_criticity</text><rect x="589" y="383" width="142" height="20" fill="#fff" stroke="#262626" stroke-width="1.150"/><text transform="translate(660 396.65) scale(1.1 1)" font-size="9.6" fill="#a9a9a9" text-anchor="middle">move2production</text><rect x="589" y="403" width="142" height="20" fill="#fff" stroke="#262626" stroke-width="1.150"/><text transform="translate(660 416.65) scale(1.1 1)" font-size="9.6" fill="#a9a9a9" text-anchor="middle">contacts_list</text><rect x="589" y="423" width="142" height="20" fill="#fff" stroke="#262626" stroke-width="1.150"/><text transform="translate(660 436.65) scale(1.1 1)" font-size="9.6" fill="#a9a9a9" text-anchor="middle">documents_list</text><rect x="589" y="443" width="142" height="20" fill="#fff" stroke="#262626" stroke-width="1.150"/><text transform="translate(660 456.65) scale(1.1 1)" font-size="9.6" fill="#a9a9a9" text-anchor="middle">applicationsolution_list</text><rect x="589" y="463" width="142" height="20" fill="#fff" stroke="#262626" stroke-width="1.150"/><text transform="translate(660 476.65) scale(1.1 1)" font-size="9.6" fill="#a9a9a9" text-anchor="middle">softwares_list</text><rect x="589" y="483" width="142" height="20" fill="#fff" stroke="#262626" stroke-width="1.150"/><text transform="translate(660 496.65) scale(1.1 1)" font-size="9.6" fill="#a9a9a9" text-anchor="middle">providercontracts_list</text><rect x="589" y="503" width="142" height="20" fill="#fff" stroke="#262626" stroke-width="1.150"/><text transform="translate(660 516.65) scale(1.1 1)" font-size="9.6" fill="#a9a9a9" text-anchor="middle">services_list</text><rect x="589" y="523" width="142" height="20" fill="#fff" stroke="#262626" stroke-width="1.150"/><text transform="translate(660 536.65) scale(1.1 1)" font-size="9.6" fill="#a9a9a9" text-anchor="middle">tickets_list</text><rect x="589" y="543" width="142" height="20" fill="#fff" stroke="#262626" stroke-width="1.150"/><text transform="translate(660 556.65) scale(1.1 1)" font-size="9.6" fill="#a9a9a9" text-anchor="middle">serialnumber</text><rect x="589" y="563" width="142" height="20" fill="#fff" stroke="#262626" stroke-width="1.150"/><text transform="translate(660 576.65) scale(1.1 1)" font-size="9.6" fill="#a9a9a9" text-anchor="middle">location_id</text><rect x="589" y="583" width="142" height="20" fill="#fff" stroke="#262626" stroke-width="1.150"/><text transform="translate(660 596.65) scale(1.1 1)" font-size="9.6" fill="#a9a9a9" text-anchor="middle">location_name</text><rect x="589" y="603" width="142" height="20" fill="#fff" stroke="#262626" stroke-width="1.150"/><text transform="translate(660 616.65) scale(1.1 1)" font-size="9.6" fill="#a9a9a9" text-anchor="middle">status</text><rect x="589" y="623" width="142" height="20" fill="#fff" stroke="#262626" stroke-width="1.150"/><text transform="translate(660 636.65) scale(1.1 1)" font-size="9.6" fill="#a9a9a9" text-anchor="middle">brand_id</text><rect x="589" y="643" width="142" height="20" fill="#fff" stroke="#262626" stroke-width="1.150"/><text transform="translate(660 656.65) scale(1.1 1)" font-size="9.6" fill="#a9a9a9" text-anchor="middle">brand_name</text><rect x="589" y="663" width="142" height="20" fill="#fff" stroke="#262626" stroke-width="1.150"/><text transform="translate(660 676.65) scale(1.1 1)" font-size="9.6" fill="#a9a9a9" text-anchor="middle">model_id</text><rect x="589" y="683" width="142" height="20" fill="#fff" stroke="#262626" stroke-width="1.150"/><text transform="translate(660 696.65) scale(1.1 1)" font-size="9.6" fill="#a9a9a9" text-anchor="middle">model_name</text><rect x="589" y="703" width="142" height="20" fill="#fff" stroke="#262626" stroke-width="1.150"/><text transform="translate(660 716.65) scale(1.1 1)" font-size="9.6" fill="#a9a9a9" text-anchor="middle">asset_number</text><rect x="589" y="723" width="142" height="20" fill="#fff" stroke="#262626" stroke-width="1.150"/><text transform="translate(660 736.65) scale(1.1 1)" font-size="9.6" fill="#a9a9a9" text-anchor="middle">purchase_date</text><rect x="589" y="743" width="142" height="20" fill="#fff" stroke="#262626" stroke-width="1.150"/><text transform="translate(660 755.85) scale(1.1 1)" font-size="9.6" fill="#a9a9a9" text-anchor="middle">end_of_warranty</text><rect x="589" y="763" width="142" height="20" fill="#fff" stroke="#262626" stroke-width="1.150"/><text transform="translate(660 776.65) scale(1.1 1)" font-size="9.6" fill="#a9a9a9" text-anchor="middle">networkdevice_list</text><rect x="589" y="783" width="142" height="20" fill="#fff" stroke="#262626" stroke-width="1.150"/><text transform="translate(660 795.85) scale(1.1 1)" font-size="9.6" fill="#a9a9a9" text-anchor="middle">physicalinterface_list</text><rect x="589" y="803" width="142" height="20" fill="#fff" stroke="#262626" stroke-width="1.150"/><text transform="translate(660 816.65) scale(1.1 1)" font-size="9.6" fill="#a9a9a9" text-anchor="middle">rack_id</text><rect x="589" y="823" width="142" height="20" fill="#fff" stroke="#262626" stroke-width="1.150"/><text transform="translate(660 836.65) scale(1.1 1)" font-size="9.6" fill="#a9a9a9" text-anchor="middle">rack_name</text><rect x="899" y="433" width="72" height="20" fill="#fff" stroke="#262626" stroke-width="1.150"/><text transform="translate(935 446.65) scale(1.1 1)" font-size="9.6" fill="#000" text-anchor="middle">date</text><rect x="899" y="453" width="72" height="20" fill="#fff" stroke="#262626" stroke-width="1.150"/><text transform="translate(935 466.65) scale(1.1 1)" font-size="9.6" fill="#000" text-anchor="middle">duration</text><rect x="899" y="493" width="72" height="20" fill="#fff" stroke="#262626" stroke-width="1.150"/><text transform="translate(935 506.65) scale(1.1 1)" font-size="9.6" fill="#000" text-anchor="middle">email</text><rect x="899" y="513" width="72" height="20" fill="#fff" stroke="#262626" stroke-width="1.150"/><text transform="translate(935 526.65) scale(1.1 1)" font-size="9.6" fill="#000" text-anchor="middle">url</text><rect x="899" y="533" width="72" height="20" fill="#fff" stroke="#262626" stroke-width="1.150"/><text transform="translate(935 546.65) scale(1.1 1)" font-size="9.6" fill="#000" text-anchor="middle">decimal</text><rect x="899" y="553" width="72" height="20" fill="#fff" stroke="#262626" stroke-width="1.150"/><text transform="translate(935 566.65) scale(1.1 1)" font-size="9.6" fill="#000" text-anchor="middle">tagset</text><rect x="866" y="473" width="113" height="20" fill="#fff" stroke="#262626" stroke-width="1.150"/><text transform="translate(922.5 486.65) scale(1.1 1)" font-size="9.6" fill="#000" text-anchor="middle">document_name</text><rect x="813" y="673" width="94" height="20" fill="#fff" stroke="#262626" stroke-width="1.150"/><text transform="translate(860 686.65) scale(1.1 1)" font-size="9.6" fill="#000" text-anchor="middle">ticket_title</text><rect x="813" y="693" width="94" height="20" fill="#fff" stroke="#262626" stroke-width="1.150"/><text transform="translate(860 706.65) scale(1.1 1)" font-size="9.6" fill="#000" text-anchor="middle">impact</text><rect x="813" y="713" width="94" height="20" fill="#fff" stroke="#262626" stroke-width="1.150"/><text transform="translate(860 726.65) scale(1.1 1)" font-size="9.6" fill="#000" text-anchor="middle">impact_code</text><rect x="792" y="793" width="111" height="20" fill="#fff" stroke="#262626" stroke-width="1.150"/><text transform="translate(847.5 806.65) scale(1.1 1)" font-size="9.6" fill="#000" text-anchor="middle">network_port</text><rect x="792" y="813" width="111" height="20" fill="#fff" stroke="#262626" stroke-width="1.150"/><text transform="translate(847.5 826.65) scale(1.1 1)" font-size="9.6" fill="#000" text-anchor="middle">device_port</text><rect x="792" y="833" width="111" height="20" fill="#fff" stroke="#262626" stroke-width="1.150"/><text transform="translate(847.5 846.65) scale(1.1 1)" font-size="9.6" fill="#000" text-anchor="middle">x</text><rect x="1064" y="518" width="40" height="30" rx="1" fill="#fff" stroke="#262626" stroke-width="1.100"/><rect x="1039" y="558" width="80" height="30" rx="1" fill="#fff" stroke="#262626" stroke-width="1.100"/><text transform="translate(1061.5 576.1) scale(1.1 1)" font-size="9.6" fill="#000" text-anchor="start">ProviderContract</text><rect x="1014" y="598" width="80" height="30" rx="1" fill="#fff" stroke="#262626" stroke-width="1.100"/><text transform="translate(1036.5 616.6) scale(1.1 1)" font-size="9.6" fill="#000" text-anchor="start">Service</text><rect x="989" y="638" width="71.5" height="30" rx="1" fill="#fff" stroke="#262626" stroke-width="1.100"/><text transform="translate(1025.3 656.6) scale(1.1 1)" font-size="9.6" fill="#000" text-anchor="middle">Ticket</text><rect x="964" y="758" width="110" height="30" rx="1" fill="#fff" stroke="#262626" stroke-width="1.100"/><text transform="translate(986.4 776.6) scale(1.045 1)" font-size="9.6" fill="#000" text-anchor="start">NetworkDevice</text><rect x="939" y="798" width="123.5" height="30" rx="1" fill="#fff" stroke="#262626" stroke-width="1.100"/><text transform="translate(1001 816.4) scale(1.1 1)" font-size="9.6" fill="#000" text-anchor="middle">PhysicalInterface</text><g fill="none" stroke="#fff" stroke-opacity=".66" stroke-width="1.600"><path d="M493.500 333H588.500"/><path d="M473.500 573H588.500"/><path d="M460.500 633H588.500"/><path d="M462.500 673H588.500"/><path d="M455.500 813H588.500"/><path d="M731.500 413H1069"/><path d="M731.500 433H922"/><path d="M731.500 453H1069"/><path d="M731.500 473H910"/><path d="M731.500 493H1069"/><path d="M731.500 513H872.500V613H1014"/><path d="M731.500 533H860V653H989"/><path d="M884.500 493V573H1039"/><path d="M893.500 474V533H1060"/><path d="M731.500 773H964"/><path d="M731.500 793H831.200V812.800H935"/></g><path d="M893.500 474.500V492" stroke="#fff" stroke-width="1.400" fill="none"/><g fill="none" stroke="#fff" stroke-opacity=".85" stroke-width="1.600" stroke-dasharray="3 2"><path d="M935 414V433"/><path d="M860 654V673"/></g><g fill="none" stroke="#fff" stroke-opacity=".85" stroke-width="1" stroke-dasharray="3 2"><path d="M847.500 774V793"/></g><g fill="none" stroke="#fff" stroke-width="1"><path d="M503.1 329L498.8 333L503.1 337"/><path d="M483.1 569L478.8 573L483.1 577"/><path d="M470.1 629L465.8 633L470.1 637"/><path d="M472.1 669L467.8 673L472.1 677"/><path d="M465.1 809L460.8 813L465.1 817"/><path d="M741.3 469L737 473L741.3 477"/><path d="M741.3 789L737 793L741.3 797"/></g><rect x="578.400" y="237.800" width="20.800" height="30.200" rx="1.500" fill="url(#gsrv)"/><rect x="581.400" y="241" width="14.800" height="4" fill="#1f55c0"/><circle cx="594.300" cy="243" r=".9" fill="#5fd2ff"/><rect x="581.400" y="247.1" width="14.800" height="4" fill="#1f55c0"/><circle cx="594.300" cy="249.1" r=".9" fill="#5fd2ff"/><rect x="581.400" y="253.2" width="14.800" height="4" fill="#1f55c0"/><circle cx="594.300" cy="255.2" r=".9" fill="#5fd2ff"/><circle cx="588.800" cy="262.800" r="1.700" fill="#fff"/><rect x="380.900" y="303.800" width="16.300" height="3.400" fill="#1f9fe8"/><rect x="374.900" y="306.900" width="28.200" height="1.400" fill="#35c1f1"/><rect x="375.200" y="308.200" width="27" height="15.400" fill="#199be2"/><rect x="374" y="323.400" width="29.900" height="8.700" fill="#0078d4"/><rect x="378.7" y="311.2" width="2.600" height="2.600" fill="#0d62ab"/><rect x="378.7" y="317.3" width="2.600" height="2.600" fill="#0d62ab"/><rect x="384.7" y="311.2" width="2.600" height="2.600" fill="#0d62ab"/><rect x="384.7" y="317.3" width="2.600" height="2.600" fill="#0d62ab"/><rect x="390.7" y="311.2" width="2.600" height="2.600" fill="#0d62ab"/><rect x="390.7" y="317.3" width="2.600" height="2.600" fill="#0d62ab"/><rect x="396.7" y="311.2" width="2.600" height="2.600" fill="#0d62ab"/><rect x="396.7" y="317.3" width="2.600" height="2.600" fill="#0d62ab"/><rect x="378.700" y="326.400" width="2.600" height="2.600" fill="#0d62ab"/><rect x="396.700" y="326.400" width="2.600" height="2.600" fill="#0d62ab"/><rect x="384.700" y="326.200" width="8.400" height="5.900" fill="#005ba1"/><path d="M375.400 545L381.200 542.400V570.300L375.400 571.600z" fill="#50e6ff"/><path d="M381.200 542.400L388 545.300V571.800L381.200 570.300z" fill="#1b9de2"/><path d="M388 545.300H402.500V571.800H388z" fill="#35c1f1"/><path d="M398 561.300L391 554.500A8.900 8.900 0 1 1 405 554.500z" fill="#d03a06"/><circle cx="398" cy="549" r="3.900" fill="#fff"/><rect x="376.2" y="783.900" width="2.700" height="28.800" fill="#3375d6"/><rect x="387.7" y="783.900" width="2.700" height="28.800" fill="#3375d6"/><rect x="399" y="783.900" width="2.700" height="28.800" fill="#3375d6"/><rect x="378.900" y="785.3" width="8.800" height="2.300" fill="#35c1f1"/><rect x="390.400" y="785.3" width="8.600" height="2.300" fill="#35c1f1"/><rect x="378.900" y="791.25" width="8.800" height="2.300" fill="#35c1f1"/><rect x="390.400" y="791.25" width="8.600" height="2.300" fill="#35c1f1"/><rect x="378.900" y="797.2" width="8.800" height="2.300" fill="#35c1f1"/><rect x="390.400" y="797.2" width="8.600" height="2.300" fill="#35c1f1"/><rect x="378.900" y="803.15" width="8.800" height="2.300" fill="#35c1f1"/><rect x="390.400" y="803.15" width="8.600" height="2.300" fill="#35c1f1"/><rect x="378.900" y="809.1" width="8.800" height="2.300" fill="#35c1f1"/><rect x="390.400" y="809.1" width="8.600" height="2.300" fill="#35c1f1"/><rect x="380.200" y="821.900" width="17.600" height="20" fill="#e9e9e9"/><rect x="382.200" y="823.900" width="13.600" height="20" fill="url(#genc)"/><rect x="950.700" y="744.500" width="26.800" height="26.600" rx="2.200" fill="url(#ggrn)"/><path d="M965.7 751H973.8M971 747.7L974.3 751L971 754.3" fill="none" stroke="#fff" stroke-width="2.100"/><path d="M962.7 755.3H954.7M957.5 752L954.2 755.3L957.5 758.6" fill="none" stroke="#fff" stroke-width="2.100"/><path d="M965.7 761.1H973.8M971 757.8L974.3 761.1L971 764.4" fill="none" stroke="#fff" stroke-width="2.100"/><path d="M962.7 764.9H954.7M957.5 761.6L954.2 764.9L957.5 768.2" fill="none" stroke="#fff" stroke-width="2.100"/><circle cx="937.100" cy="794.400" r="13.200" fill="url(#gglb)"/><path d="M929 785.500c2-2.500 6-3.500 8.500-3l-1 3.500l-3.500.500l1.500 3l-3 2.500l-3.500-1.500l-2.500 1.500c-.5-2 1-5 3.500-6.500zM940 790l5.500-5c2.500 2 4.500 5.500 4.700 9l-3.200 4l-2.500-3.500l-3.500 1zM928 798l4 1l2 4l-1.500 3.500c-3-1-5-4.500-4.500-8.500zM938 800l4 1.500l-2 5l-3-2z" fill="#5ccbf9" opacity=".8"/><path d="M945 801.500c5-2.500 9 .5 7.500 3.500c-1.500 3-8 1.500-8.500 4.500c-.3 2 2 3 4.500 3" fill="none" stroke="#1e88e5" stroke-width="1.300"/><rect x="948.500" y="810.300" width="4.200" height="3.800" fill="#1e88e5" transform="rotate(-12 950 812)"/><rect x="952.600" y="810.300" width="2.200" height="2.600" fill="#c8c8c8" transform="rotate(-12 953 811)"/><circle cx="1063.500" cy="513.500" r="10" fill="#4fc3e8"/><circle cx="1063.500" cy="513.500" r="4.500" fill="#1f6fd6"/><circle cx="1063.500" cy="513.500" r="2" fill="#cfe9f7"/><rect x="1051.100" y="514.100" width="30" height="17.300" rx="1" fill="url(#gora)"/><rect x="1059.500" y="517" width="7" height="1.300" fill="#7a4a1a"/><rect x="1026.800" y="544.700" width="22.700" height="26.400" fill="url(#gcer)"/><rect x="1024.900" y="544.700" width="22.200" height="3.800" fill="#4ec5f5"/><rect x="1030.800" y="553.200" width="15.300" height="2.100" fill="#4ec5f5"/><rect x="1030.800" y="557.300" width="15.300" height="2.100" fill="#4ec5f5"/><path d="M1039.700 567.500h4.600l.3 6.700l-2.600-1.700l-2.600 1.700z" fill="#a335d9"/><circle cx="1042" cy="565.200" r="3.600" fill="#ffb900"/><g transform="translate(1019.100 590.500)"><circle r="6.600" fill="#8a8d91"/><rect x="-2.500" y="-8.800" width="5" height="4" rx=".8" fill="#8a8d91" transform="rotate(0)"/><rect x="-2.500" y="-8.800" width="5" height="4" rx=".8" fill="#8a8d91" transform="rotate(60)"/><rect x="-2.500" y="-8.800" width="5" height="4" rx=".8" fill="#8a8d91" transform="rotate(120)"/><rect x="-2.500" y="-8.800" width="5" height="4" rx=".8" fill="#8a8d91" transform="rotate(180)"/><rect x="-2.500" y="-8.800" width="5" height="4" rx=".8" fill="#8a8d91" transform="rotate(240)"/><rect x="-2.500" y="-8.800" width="5" height="4" rx=".8" fill="#8a8d91" transform="rotate(300)"/><circle r="4.100" fill="#fff"/><circle r="2.600" fill="#1d6fd0"/></g><path d="M998.200 599.900L1004.800 597.300L1013.700 600.600L1020 604.500L1028.500 602.600C1030.500 602.300 1031 605 1029.500 606L1019 611.600L1012.300 609.600L1004.800 606.600L998.200 609.500z" fill="url(#ghnd)"/></svg>
<svg class="a" style="left:1072px;top:525px" width="4" height="7" viewBox="0 0 4 7" shape-rendering="crispEdges"><g fill="#e2e2e2"><rect x="3" y="3" width="1" height="1"/><rect x="2" y="2" width="1" height="1"/><rect x="2" y="4" width="1" height="1"/><rect x="1" y="1" width="1" height="1"/><rect x="1" y="3" width="1" height="1"/><rect x="1" y="5" width="1" height="1"/><rect x="0" y="0" width="1" height="1"/><rect x="0" y="2" width="1" height="1"/><rect x="0" y="4" width="1" height="1"/><rect x="0" y="6" width="1" height="1"/></g></svg>
<div class="a" style="left:1081px;top:190px;width:412px;height:660px;background:transparent;border:1px solid #5a5a5a;border-bottom:0"></div>
<div class="a" style="left:1092px;top:174px;width:113px;height:34px;background:#555;"></div>
<span class="t" style="left:1100.00px;top:182.50px;font-size:13px;line-height:17px;font-weight:700;color:#fff;transform:scaleX(0.9521);transform-origin:0 50%;">Class properties</span>
<span class="t" style="left:1095.20px;top:217.80px;font-size:13px;line-height:17px;font-weight:700;color:#fff;transform:scaleX(0.9175);transform-origin:0 50%;">Name</span>
<span class="t" style="left:1095.20px;top:245.80px;font-size:13px;line-height:17px;font-weight:700;color:#fff;transform:scaleX(0.9420);transform-origin:0 50%;">Label</span>
<span class="t" style="left:1095.20px;top:273.80px;font-size:13px;line-height:17px;font-weight:700;color:#fff;transform:scaleX(0.9508);transform-origin:0 50%;">Description</span>
<span class="t" style="left:1095.20px;top:301.90px;font-size:13px;line-height:17px;font-weight:700;color:#fff;transform:scaleX(0.9485);transform-origin:0 50%;">Derived From</span>
<span class="t" style="left:1095.20px;top:329.80px;font-size:13px;line-height:17px;font-weight:700;color:#fff;">Abstract</span>
<span class="t" style="left:1095.20px;top:356.00px;font-size:13px;line-height:17px;font-weight:700;color:#fff;transform:scaleX(0.9345);transform-origin:0 50%;">Parent Class'</span>
<span class="t" style="left:1095.20px;top:373.80px;font-size:13px;line-height:17px;font-weight:700;color:#fff;transform:scaleX(0.9480);transform-origin:0 50%;">Obsolescence Condition</span>
<span class="t" style="left:1095.20px;top:399.90px;font-size:13px;line-height:17px;font-weight:700;color:#fff;transform:scaleX(0.9480);transform-origin:0 50%;">Obsolescence Condition</span>
<span class="t" style="left:1095.20px;top:443.80px;font-size:13px;line-height:17px;font-weight:700;color:#fff;transform:scaleX(0.9912);transform-origin:0 50%;">Icon</span>
<span class="t" style="left:1095.20px;top:489.10px;font-size:13px;line-height:17px;font-weight:700;color:#fff;transform:scaleX(0.9425);transform-origin:0 50%;">Color</span>
<span class="t" style="left:1095.20px;top:590.00px;font-size:13px;line-height:17px;font-weight:700;color:#fff;transform:scaleX(0.9430);transform-origin:0 50%;">Reconciliation Keys</span>
<span class="t" style="left:1095.20px;top:704.00px;font-size:13px;line-height:17px;font-weight:700;color:#fff;transform:scaleX(0.9359);transform-origin:0 50%;">Display Name</span>
<div class="a" style="left:1253px;top:215px;width:182px;height:21.5px;background:#fff;border:1px solid #767676;border-radius:2px"></div>
<span class="t" style="left:1257.00px;top:218.70px;font-size:12px;line-height:16px;font-weight:400;color:#000;transform:scaleX(0.9195);transform-origin:0 50%;">Server</span>
<div class="a" style="left:1253px;top:243px;width:182px;height:22px;background:#fff;border:2px solid #9a9a9a;border-right-color:#d8d8d8;border-bottom-color:#d8d8d8;border-radius:1px"></div>
<span class="t" style="left:1257.00px;top:246.70px;font-size:12px;line-height:16px;font-weight:400;color:#000;transform:scaleX(0.9195);transform-origin:0 50%;">Server</span>
<div class="a" style="left:1253px;top:271px;width:182px;height:22px;background:#fff;border:2px solid #9a9a9a;border-right-color:#d8d8d8;border-bottom-color:#d8d8d8;border-radius:1px"></div>
<svg class="a" style="left:1417px;top:248px" width="16" height="11" viewBox="0 0 16 11"><rect width="16" height="11" fill="#fff"/><rect y="0" width="16" height="1" fill="#dd8a78"/><rect y="10" width="16" height="1" fill="#d98370"/><rect x="1" y="2" width="14" height="1" fill="#f0484c"/><rect x="1" y="4" width="14" height="1" fill="#f0484c"/><rect x="1" y="6" width="14" height="1" fill="#f0484c"/><rect x="1" y="8" width="14" height="1" fill="#f0484c"/><rect width="9" height="7" fill="#4b72dc"/><rect x="1" y="1" width="1" height="1" fill="#fff" opacity=".9"/><rect x="3" y="1" width="1" height="1" fill="#fff" opacity=".9"/><rect x="5" y="1" width="1" height="1" fill="#fff" opacity=".9"/><rect x="7" y="1" width="1" height="1" fill="#fff" opacity=".9"/><rect x="2" y="3" width="1" height="1" fill="#fff" opacity=".9"/><rect x="4" y="3" width="1" height="1" fill="#fff" opacity=".9"/><rect x="6" y="3" width="1" height="1" fill="#fff" opacity=".9"/><rect x="1" y="5" width="1" height="1" fill="#fff" opacity=".9"/><rect x="3" y="5" width="1" height="1" fill="#fff" opacity=".9"/><rect x="5" y="5" width="1" height="1" fill="#fff" opacity=".9"/><rect x="7" y="5" width="1" height="1" fill="#fff" opacity=".9"/><rect x="0" y="7" width="1" height="4" fill="#e9b3a8"/><rect x="15" y="0" width="1" height="11" fill="#d9a093"/></svg>
<svg class="a" style="left:1417px;top:276px" width="16" height="11" viewBox="0 0 16 11"><rect width="16" height="11" fill="#fff"/><rect y="0" width="16" height="1" fill="#dd8a78"/><rect y="10" width="16" height="1" fill="#d98370"/><rect x="1" y="2" width="14" height="1" fill="#f0484c"/><rect x="1" y="4" width="14" height="1" fill="#f0484c"/><rect x="1" y="6" width="14" height="1" fill="#f0484c"/><rect x="1" y="8" width="14" height="1" fill="#f0484c"/><rect width="9" height="7" fill="#4b72dc"/><rect x="1" y="1" width="1" height="1" fill="#fff" opacity=".9"/><rect x="3" y="1" width="1" height="1" fill="#fff" opacity=".9"/><rect x="5" y="1" width="1" height="1" fill="#fff" opacity=".9"/><rect x="7" y="1" width="1" height="1" fill="#fff" opacity=".9"/><rect x="2" y="3" width="1" height="1" fill="#fff" opacity=".9"/><rect x="4" y="3" width="1" height="1" fill="#fff" opacity=".9"/><rect x="6" y="3" width="1" height="1" fill="#fff" opacity=".9"/><rect x="1" y="5" width="1" height="1" fill="#fff" opacity=".9"/><rect x="3" y="5" width="1" height="1" fill="#fff" opacity=".9"/><rect x="5" y="5" width="1" height="1" fill="#fff" opacity=".9"/><rect x="7" y="5" width="1" height="1" fill="#fff" opacity=".9"/><rect x="0" y="7" width="1" height="4" fill="#e9b3a8"/><rect x="15" y="0" width="1" height="11" fill="#d9a093"/></svg>
<span class="t" style="left:1253.00px;top:302.95px;font-size:12.5px;line-height:16.5px;font-weight:400;color:#f2f2f2;transform:scaleX(0.9763);transform-origin:0 50%;">DatacenterDevice</span>
<div class="a" style="left:1253.5px;top:331.5px;width:13px;height:13px;background:#fff;border:1.500px solid #767687;border-radius:2px"></div>
<span class="t" style="left:1253.00px;top:365.55px;font-size:12.5px;line-height:16.5px;font-weight:400;color:#f2f2f2;transform:scaleX(1.0337);transform-origin:0 50%;">status = 'obsolete'</span>
<div class="a" style="left:1253px;top:397px;width:182px;height:21.5px;background:#fff;border:1px solid #767676;border-radius:2px"></div>
<div class="a" style="left:1253px;top:425px;width:127px;height:54px;background:#fff;border:1px solid #8a8a8a;border-radius:3px"></div>
<svg class="a" style="left:1273.6px;top:431.7px" width="28.2" height="40.3" viewBox="0 0 21 30"><defs><linearGradient id="sgr1" x1="0" y1="0" x2="0" y2="1"><stop offset="0" stop-color="#2aa4f4"/><stop offset="1" stop-color="#0f7ee0"/></linearGradient></defs><rect width="21" height="30" rx="1.500" fill="url(#sgr1)"/><rect x="3" y="3.200" width="15" height="4" fill="#1f55c0"/><rect x="3" y="9.300" width="15" height="4" fill="#1f55c0"/><rect x="3" y="15.400" width="15" height="4" fill="#1f55c0"/><circle cx="16" cy="5.200" r=".9" fill="#5fd2ff"/><circle cx="16" cy="11.300" r=".9" fill="#5fd2ff"/><circle cx="16" cy="17.400" r=".9" fill="#5fd2ff"/><circle cx="10.500" cy="25" r="1.700" fill="#fff"/></svg>
<span class="t" style="left:1320.20px;top:444.25px;font-size:12.5px;line-height:16.5px;font-weight:400;color:#333;transform:scaleX(0.9065);transform-origin:0 50%;">icons8-se</span>
<div class="a" style="left:1380.5px;top:425px;width:54.5px;height:54px;background:#e9e9ed;border:1px solid #8f8f9d;border-radius:3px"></div>
<svg class="a" style="left:1404px;top:446px" width="12" height="12" viewBox="0 0 12 12"><circle cx="6" cy="6" r="5.600" fill="#111"/><path d="M6 3v6M3 6h6" stroke="#fff" stroke-width="1.700"/></svg>
<div class="a" style="left:1253px;top:486px;width:118px;height:22px;background:#fff;border:1px solid #767676;border-radius:2px"></div>
<div class="a" style="left:1371.5px;top:486px;width:63.5px;height:22px;background:#000;border:1.500px solid #a0a0a0;border-radius:2px"></div>
<div class="a" style="left:1253px;top:514px;width:182px;height:165.5px;background:#fff;border:1px solid #767676;border-radius:2px"></div>
<div class="a" style="left:1255.2px;top:658.4px;width:170px;height:19.4px;background:#cecece;"></div>
<span class="t" style="left:1259.20px;top:520.65px;font-size:12.5px;line-height:16.5px;font-weight:400;color:#111;transform:scaleX(0.9309);transform-origin:0 50%;">location_id_obsolescence_flag</span>
<span class="t" style="left:1259.20px;top:540.65px;font-size:12.5px;line-height:16.5px;font-weight:400;color:#111;transform:scaleX(0.9593);transform-origin:0 50%;">location_name</span>
<span class="t" style="left:1259.20px;top:560.65px;font-size:12.5px;line-height:16.5px;font-weight:400;color:#111;transform:scaleX(0.9734);transform-origin:0 50%;">managementip</span>
<span class="t" style="left:1259.20px;top:580.65px;font-size:12.5px;line-height:16.5px;font-weight:400;color:#111;transform:scaleX(0.9599);transform-origin:0 50%;">model_id</span>
<span class="t" style="left:1259.20px;top:600.65px;font-size:12.5px;line-height:16.5px;font-weight:400;color:#111;transform:scaleX(0.9594);transform-origin:0 50%;">model_id_friendlyname</span>
<span class="t" style="left:1259.20px;top:620.65px;font-size:12.5px;line-height:16.5px;font-weight:400;color:#111;transform:scaleX(0.9548);transform-origin:0 50%;">model_name</span>
<span class="t" style="left:1259.20px;top:640.65px;font-size:12.5px;line-height:16.5px;font-weight:400;color:#111;transform:scaleX(0.9833);transform-origin:0 50%;">move2production</span>
<span class="t" style="left:1259.20px;top:660.65px;font-size:12.5px;line-height:16.5px;font-weight:400;color:#111;transform:scaleX(0.9590);transform-origin:0 50%;">name</span>
<div class="a" style="left:1425px;top:560px;width:7.7px;height:17.4px;background:#d6dde6;"></div>
<div class="a" style="left:1253px;top:688.3px;width:182px;height:29.5px;background:transparent;border:1px solid #a8a8a8"></div>
<div class="a" style="left:1265px;top:693.2px;width:36.2px;height:20px;background:#555;border:1px solid #9a9a9a;border-radius:4px"></div>
<span class="t" style="left:1268.20px;top:696.05px;font-size:12.5px;line-height:16.5px;font-weight:400;color:#fff;transform:scaleX(0.9431);transform-origin:0 50%;">name</span>
<svg class="a" style="left:1256.500px;top:719.700px" width="13" height="13" viewBox="0 0 13 13"><circle cx="6.500" cy="6.500" r="6" fill="#808080"/><path d="M5 3.300L8.800 6.500L5 9.700z" fill="#333"/></svg>
<span class="t" style="left:1272.80px;top:720.05px;font-size:12.5px;line-height:16.5px;font-weight:400;color:#f2f2f2;transform:scaleX(0.8847);transform-origin:0 50%;">Fields</span>
<div class="a" style="left:1092px;top:739.3px;width:390px;height:19.5px;background:#555;"></div>
<span class="t" style="left:1231.05px;top:740.00px;font-size:13px;line-height:17px;font-weight:700;color:#fff;transform:scaleX(0.8784);transform-origin:50% 50%;">Uniqueness Rules</span>
<div class="a" style="left:1092px;top:787px;width:91px;height:27px;background:#555;border:1px solid #6a6a6a"></div>
<span class="t" style="left:1105.00px;top:792.10px;font-size:13px;line-height:17px;font-weight:700;color:#fff;transform:scaleX(0.8803);transform-origin:0 50%;">Add a rule...</span>
<div class="a" style="left:1092px;top:814px;width:390px;height:20px;background:#555;"></div>
<span class="t" style="left:1255.93px;top:816.20px;font-size:13px;line-height:17px;font-weight:700;color:#fff;transform:scaleX(0.9012);transform-origin:50% 50%;">Advanced</span>
</body></html>
